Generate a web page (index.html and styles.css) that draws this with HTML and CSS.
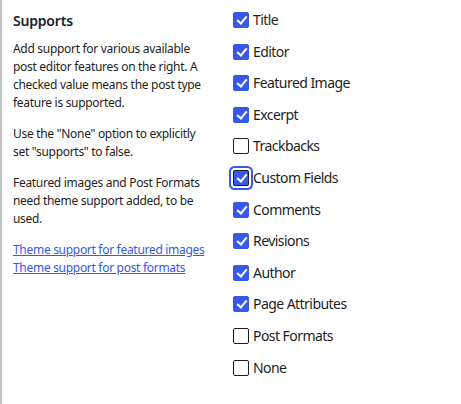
FILE: index.html
```html
<!DOCTYPE html>
<html>
<head>
<meta charset="utf-8">
<link rel="stylesheet" href="styles.css">
</head>
<body>
<div class="panel">
  <div class="info">
    <h2 class="title">Supports</h2>
    <p class="desc">Add support for various available post editor features on the right. A checked value means the post type feature is supported.</p>
    <p class="desc">Use the "None" option to explicitly set "supports" to false.</p>
    <p class="desc">Featured images and Post Formats need theme support added, to be used.</p>
    <p class="desc links"><a href="#">Theme support for featured images</a><br><a href="#">Theme support for post formats</a></p>
  </div>
  <ul class="options">
    <li class="opt"><span class="box checked"></span><span class="lbl">Title</span></li>
    <li class="opt"><span class="box checked"></span><span class="lbl">Editor</span></li>
    <li class="opt"><span class="box checked"></span><span class="lbl">Featured Image</span></li>
    <li class="opt"><span class="box checked"></span><span class="lbl">Excerpt</span></li>
    <li class="opt"><span class="box"></span><span class="lbl">Trackbacks</span></li>
    <li class="opt"><span class="box checked focus"></span><span class="lbl">Custom Fields</span></li>
    <li class="opt"><span class="box checked"></span><span class="lbl">Comments</span></li>
    <li class="opt"><span class="box checked"></span><span class="lbl">Revisions</span></li>
    <li class="opt"><span class="box checked"></span><span class="lbl">Author</span></li>
    <li class="opt"><span class="box checked"></span><span class="lbl">Page Attributes</span></li>
    <li class="opt"><span class="box"></span><span class="lbl">Post Formats</span></li>
    <li class="opt"><span class="box"></span><span class="lbl">None</span></li>
  </ul>
</div>
</body>
</html>
```
FILE: styles.css
```css
html, body {
  margin: 0;
  padding: 0;
  background: #fff;
}
body {
  font-family: "Noto Sans", "Open Sans", sans-serif;
  color: #1e1e1e;
}
.panel {
  display: flex;
  min-height: 404px;
  border-left: 2px solid #c3c4c7;
  box-sizing: border-box;
}
.info {
  width: 220px;
  flex: none;
  padding: 11px 12px 0 11px;
  box-sizing: border-box;
}
.title {
  margin: 0 0 9px;
  font-size: 14px;
  font-weight: 600;
  line-height: 20px;
  letter-spacing: -0.2px;
}
.desc {
  margin: 0 0 13px;
  font-size: 12px;
  line-height: 18px;
  letter-spacing: -0.3px;
}
.links a {
  color: #3858e9;
}
.options {
  list-style: none;
  margin: 0;
  padding: 12px 0 0 11px;
  display: flex;
  flex-direction: column;
  gap: 15.6px;
}
.opt {
  display: flex;
  align-items: center;
  height: 16px;
  gap: 4px;
}
.box {
  width: 16px;
  height: 16px;
  box-sizing: border-box;
  border: 1px solid #1e1e1e;
  border-radius: 2px;
  position: relative;
  flex: none;
}
.box.checked {
  background: #3858e9;
  border-color: #3858e9;
}
.box.checked::after {
  content: "";
  position: absolute;
  left: 5px;
  top: 1px;
  width: 4px;
  height: 8px;
  border: solid #fff;
  border-width: 0 2.5px 2.5px 0;
  transform: rotate(40deg);
}
.box.focus {
  box-shadow: 0 0 0 2px #fff, 0 0 0 4px #3858e9;
  outline: 1px solid #1e1e1e;
  outline-offset: -1px;
}
.lbl {
  font-size: 14px;
  line-height: 20px;
  letter-spacing: -0.55px;
}
```
